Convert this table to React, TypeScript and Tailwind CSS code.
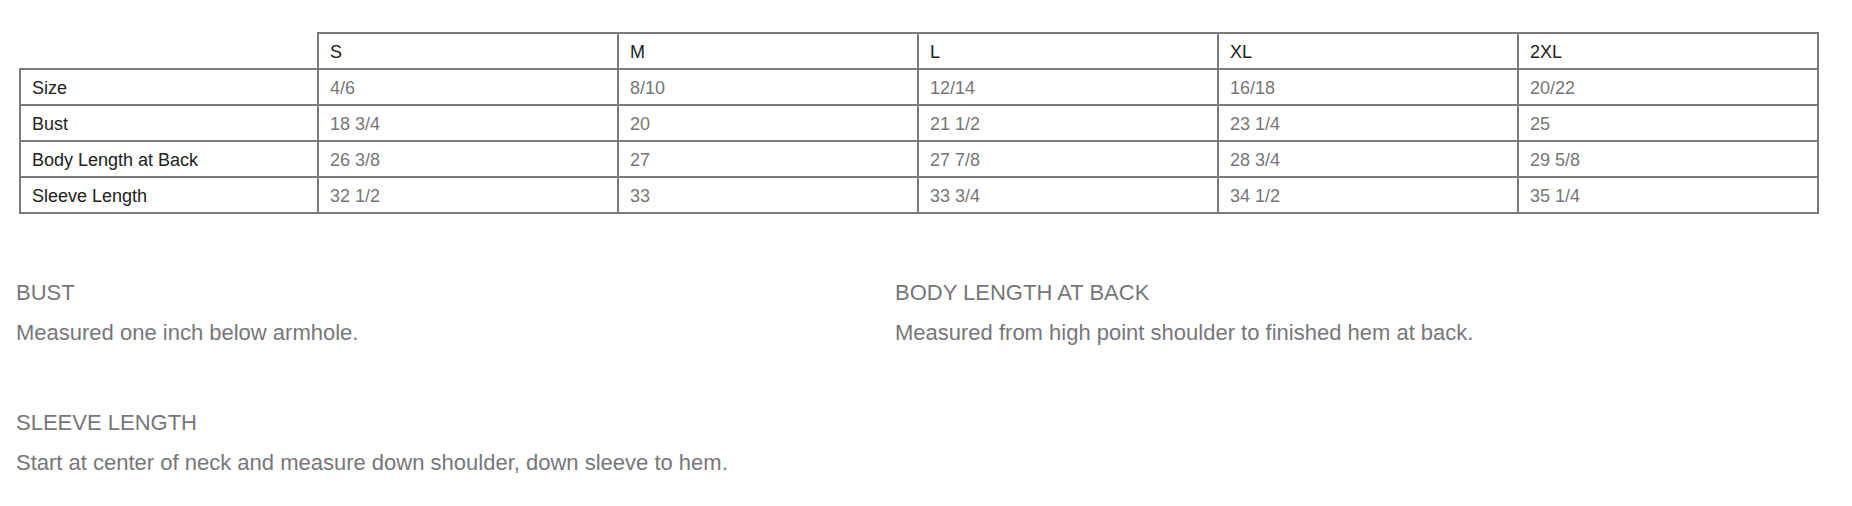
const sizes = ['S', 'M', 'L', 'XL', '2XL']

const rows: { label: string; values: string[] }[] = [
  { label: 'Size', values: ['4/6', '8/10', '12/14', '16/18', '20/22'] },
  { label: 'Bust', values: ['18 3/4', '20', '21 1/2', '23 1/4', '25'] },
  { label: 'Body Length at Back', values: ['26 3/8', '27', '27 7/8', '28 3/4', '29 5/8'] },
  { label: 'Sleeve Length', values: ['32 1/2', '33', '33 3/4', '34 1/2', '35 1/4'] },
]

const notes = [
  { title: 'BUST', text: 'Measured one inch below armhole.' },
  { title: 'BODY LENGTH AT BACK', text: 'Measured from high point shoulder to finished hem at back.' },
  { title: 'SLEEVE LENGTH', text: 'Start at center of neck and measure down shoulder, down sleeve to hem.' },
]

const cell = 'h-[36px] border-2 border-[#7a7a7a] px-[11px] pt-[2px] pb-0 text-left align-middle font-normal'

export default function App() {
  return (
    <div className="min-h-[506px] bg-white pt-[32px] font-['Liberation_Sans',Arial,sans-serif]">
      <table className="ml-[19px] w-[1798px] table-fixed border-collapse text-[18px] leading-[22px]">
        <colgroup>
          <col className="w-[298px]" />
          {sizes.map((s) => (
            <col key={s} className="w-[300px]" />
          ))}
        </colgroup>
        <thead>
          <tr>
            <th className="h-[36px] p-0" />
            {sizes.map((s) => (
              <th key={s} className={`${cell} text-[#222]`}>
                {s}
              </th>
            ))}
          </tr>
        </thead>
        <tbody>
          {rows.map((row) => (
            <tr key={row.label}>
              <td className={`${cell} text-[#222]`}>{row.label}</td>
              {row.values.map((v, i) => (
                <td key={i} className={`${cell} text-[#777]`}>
                  {v}
                </td>
              ))}
            </tr>
          ))}
        </tbody>
      </table>

      <div className="mt-[67px] grid grid-cols-[879px_879px] gap-y-[66px] pl-[16px] text-[22px] leading-[24px] text-[#77777b]">
        {notes.map((n) => (
          <div key={n.title}>
            <h3 className="font-normal">{n.title}</h3>
            <p className="mt-[16px]">{n.text}</p>
          </div>
        ))}
      </div>
    </div>
  )
}
